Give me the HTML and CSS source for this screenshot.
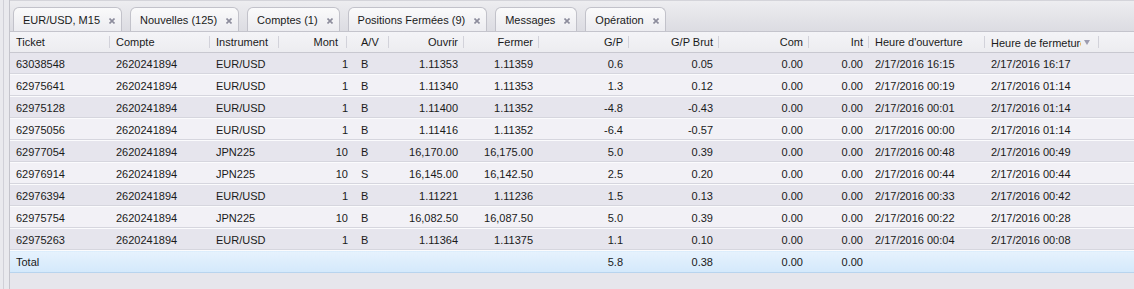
FILE: index.html
```html
<!DOCTYPE html>
<html lang="fr">
<head>
   <meta charset="UTF-8">
   <meta name="viewport" content="width=device-width, initial-scale=1.0">
   <link rel="stylesheet" href="styles.css">
</head>
<body>
   <div class="app">
      <div class="side">
         <div class="side-line"></div>
      </div>
      <div class="panel">
         <div class="tabs">
            <div class="tab">EUR/USD, M15 <svg class="close" viewBox="0 0 6 6"><path d="M0.5 0.5L5.5 5.5M5.5 0.5L0.5 5.5"/></svg></div>
            <div class="tab">Nouvelles (125) <svg class="close" viewBox="0 0 6 6"><path d="M0.5 0.5L5.5 5.5M5.5 0.5L0.5 5.5"/></svg></div>
            <div class="tab">Comptes (1) <svg class="close" viewBox="0 0 6 6"><path d="M0.5 0.5L5.5 5.5M5.5 0.5L0.5 5.5"/></svg></div>
            <div class="tab active">Positions Fermées (9) <svg class="close" viewBox="0 0 6 6"><path d="M0.5 0.5L5.5 5.5M5.5 0.5L0.5 5.5"/></svg></div>
            <div class="tab">Messages <svg class="close" viewBox="0 0 6 6"><path d="M0.5 0.5L5.5 5.5M5.5 0.5L0.5 5.5"/></svg></div>
            <div class="tab">Opération <svg class="close" viewBox="0 0 6 6"><path d="M0.5 0.5L5.5 5.5M5.5 0.5L0.5 5.5"/></svg></div>
         </div>
         <table class="grid">
            <colgroup>
               <col class="c-ticket">
               <col class="c-compte">
               <col class="c-instr">
               <col class="c-mont">
               <col class="c-av">
               <col class="c-ouvrir">
               <col class="c-fermer">
               <col class="c-gp">
               <col class="c-gpb">
               <col class="c-com">
               <col class="c-int">
               <col class="c-hou">
               <col class="c-hfe">
               <col>
            </colgroup>
            <thead>
               <tr>
                  <th>Ticket</th>
                  <th>Compte</th>
                  <th>Instrument</th>
                  <th class="num mont">Mont</th>
                  <th class="av">A/V</th>
                  <th class="num">Ouvrir</th>
                  <th class="num">Fermer</th>
                  <th class="num">G/P</th>
                  <th class="num">G/P Brut</th>
                  <th class="num">Com</th>
                  <th class="num">Int</th>
                  <th>Heure d'ouverture</th>
                  <th><span class="clip">Heure de fermeture</span><span class="arrow"></span></th>
                  <th class="last"></th>
               </tr>
            </thead>
            <tbody>
               <tr><td>63038548</td><td>2620241894</td><td>EUR/USD</td><td class="num mont">1</td><td class="av">B</td><td class="num">1.11353</td><td class="num">1.11359</td><td class="num">0.6</td><td class="num">0.05</td><td class="num">0.00</td><td class="num">0.00</td><td>2/17/2016 16:15</td><td>2/17/2016 16:17</td><td></td></tr>
               <tr><td>62975641</td><td>2620241894</td><td>EUR/USD</td><td class="num mont">1</td><td class="av">B</td><td class="num">1.11340</td><td class="num">1.11353</td><td class="num">1.3</td><td class="num">0.12</td><td class="num">0.00</td><td class="num">0.00</td><td>2/17/2016 00:19</td><td>2/17/2016 01:14</td><td></td></tr>
               <tr><td>62975128</td><td>2620241894</td><td>EUR/USD</td><td class="num mont">1</td><td class="av">B</td><td class="num">1.11400</td><td class="num">1.11352</td><td class="num">-4.8</td><td class="num">-0.43</td><td class="num">0.00</td><td class="num">0.00</td><td>2/17/2016 00:01</td><td>2/17/2016 01:14</td><td></td></tr>
               <tr><td>62975056</td><td>2620241894</td><td>EUR/USD</td><td class="num mont">1</td><td class="av">B</td><td class="num">1.11416</td><td class="num">1.11352</td><td class="num">-6.4</td><td class="num">-0.57</td><td class="num">0.00</td><td class="num">0.00</td><td>2/17/2016 00:00</td><td>2/17/2016 01:14</td><td></td></tr>
               <tr><td>62977054</td><td>2620241894</td><td>JPN225</td><td class="num mont">10</td><td class="av">B</td><td class="num">16,170.00</td><td class="num">16,175.00</td><td class="num">5.0</td><td class="num">0.39</td><td class="num">0.00</td><td class="num">0.00</td><td>2/17/2016 00:48</td><td>2/17/2016 00:49</td><td></td></tr>
               <tr><td>62976914</td><td>2620241894</td><td>JPN225</td><td class="num mont">10</td><td class="av">S</td><td class="num">16,145.00</td><td class="num">16,142.50</td><td class="num">2.5</td><td class="num">0.20</td><td class="num">0.00</td><td class="num">0.00</td><td>2/17/2016 00:44</td><td>2/17/2016 00:44</td><td></td></tr>
               <tr><td>62976394</td><td>2620241894</td><td>EUR/USD</td><td class="num mont">1</td><td class="av">B</td><td class="num">1.11221</td><td class="num">1.11236</td><td class="num">1.5</td><td class="num">0.13</td><td class="num">0.00</td><td class="num">0.00</td><td>2/17/2016 00:33</td><td>2/17/2016 00:42</td><td></td></tr>
               <tr><td>62975754</td><td>2620241894</td><td>JPN225</td><td class="num mont">10</td><td class="av">B</td><td class="num">16,082.50</td><td class="num">16,087.50</td><td class="num">5.0</td><td class="num">0.39</td><td class="num">0.00</td><td class="num">0.00</td><td>2/17/2016 00:22</td><td>2/17/2016 00:28</td><td></td></tr>
               <tr><td>62975263</td><td>2620241894</td><td>EUR/USD</td><td class="num mont">1</td><td class="av">B</td><td class="num">1.11364</td><td class="num">1.11375</td><td class="num">1.1</td><td class="num">0.10</td><td class="num">0.00</td><td class="num">0.00</td><td>2/17/2016 00:04</td><td>2/17/2016 00:08</td><td></td></tr>
               <tr class="total"><td>Total</td><td></td><td></td><td></td><td></td><td></td><td></td><td class="num">5.8</td><td class="num">0.38</td><td class="num">0.00</td><td class="num">0.00</td><td></td><td></td><td></td></tr>
            </tbody>
         </table>
         <div class="footer"></div>
      </div>
   </div>
</body>
</html>
```

FILE: styles.css
```css
body {
   margin: 0;
   font-family: "Liberation Sans", Arial, sans-serif;
   font-size: 11px;
   color: #1a1a1a;
   background-color: #e6e6ec;
}
.app {
   display: flex;
   width: 1134px;
   height: 289px;
   overflow: hidden;
}
.side {
   width: 9px;
   flex: none;
   background-color: #e9e9ee;
   border-right: 1px solid #c4c4cc;
}
.side-line {
   width: 3px;
   height: 100%;
   border-right: 1px solid #d0d0d8;
}
.panel {
   flex: 1;
   display: flex;
   flex-direction: column;
   min-width: 0;
   background-color: #e6e6ec;
}
.tabs {
   display: flex;
   align-items: flex-end;
   gap: 8px;
   height: 32px;
   padding-left: 3px;
   box-sizing: border-box;
   background: linear-gradient(#ededf0, #dcdce2);
   border-bottom: 1px solid #c4c4cc;
   border-top: 1px solid #d4d4da;
}
.tab {
   display: flex;
   align-items: center;
   height: 24px;
   padding: 0 6px 0 9px;
   box-sizing: border-box;
   border: 1px solid #c2c2ca;
   border-bottom: none;
   border-radius: 6px 6px 0 0;
   background: linear-gradient(#fafafb, #ececf0);
   white-space: nowrap;
}
.close {
   width: 6px;
   height: 6px;
   margin-left: 9px;
   margin-top: 2px;
   fill: none;
   stroke: #8c8c9c;
   stroke-width: 1.6;
}
.grid {
   width: 1400px;
   table-layout: fixed;
   border-collapse: collapse;
   border-spacing: 0;
}
.c-ticket { width: 100px; }
.c-compte { width: 100px; }
.c-instr { width: 69px; }
.c-mont { width: 71px; }
.c-av { width: 39px; }
.c-ouvrir { width: 75px; }
.c-fermer { width: 75px; }
.c-gp { width: 90px; }
.c-gpb { width: 90px; }
.c-com { width: 90px; }
.c-int { width: 60px; }
.c-hou { width: 116px; }
.c-hfe { width: 114px; }
.grid th {
   height: 20px;
   padding: 0 6px;
   font-weight: normal;
   text-align: left;
   white-space: nowrap;
   overflow: hidden;
   background: linear-gradient(#f4f4f7, #ececf0);
   border-bottom: 1px solid #c8c8d0;
   position: relative;
}
.grid th::after {
   content: "";
   position: absolute;
   right: 0;
   top: 4px;
   bottom: 4px;
   border-right: 1px solid #d2d2da;
}
.grid th.last::after {
   display: none;
}
.grid th.mont {
   padding-right: 12px;
}
.grid th.mont::after {
   right: 3px;
}
.grid td {
   height: 21px;
   padding: 0 6px;
   white-space: nowrap;
   overflow: hidden;
   border-bottom: 1px solid #fbfbfd;
   box-shadow: inset 0 -1px 0 #d6d6de;
}
.grid td.mont {
   padding-right: 2px;
}
.grid .av {
   padding-left: 11px;
}
.grid .num {
   text-align: right;
}
.grid tbody tr:nth-child(odd) td {
   background-color: #e6e5ed;
}
.grid tbody tr:nth-child(even) td {
   background-color: #f2f1f6;
}
.grid tbody tr.total td {
   background: linear-gradient(#e6f2fd, #d3e8fb);
   border-bottom: 1px solid #b8d4ee;
   box-shadow: none;
}
.clip {
   display: inline-block;
   width: 90px;
   overflow: hidden;
   vertical-align: middle;
}
.arrow {
   display: inline-block;
   width: 0;
   height: 0;
   margin-left: 3px;
   vertical-align: middle;
   border-left: 3px solid transparent;
   border-right: 3px solid transparent;
   border-top: 5px solid #9c9cb0;
}
.footer {
   flex: 1;
   background-color: #e6e6ec;
}
```
